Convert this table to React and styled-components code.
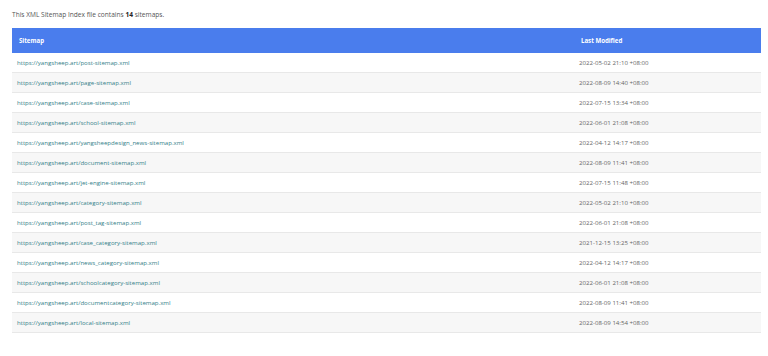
import React from 'react'
import styled, { createGlobalStyle } from 'styled-components'

const GlobalStyle = createGlobalStyle`
  body {
    margin: 0;
    background: #fff;
    font-family: "Open Sans", "Noto Sans", sans-serif;
    color: #444;
  }
`

const Page = styled.div`
  padding: 10px 7px 0 12px;
`

const Intro = styled.p`
  margin: 0 0 9px;
  font-size: 6.6px;
  line-height: 9px;
  color: #555;
  b { color: #222; }
`

const Table = styled.table`
  width: 749px;
  border-collapse: collapse;
  font-size: 6.1px;
`

const Head = styled.th`
  background: #4a7ded;
  color: #fff;
  font-weight: 700;
  text-align: left;
  height: 25px;
  padding: 0 7px;
  width: ${p => p.$width || 'auto'};
`

const Row = styled.tr`
  background: ${p => (p.$even ? '#f7f7f7' : '#fff')};
  border-bottom: 1px solid #e8e8e8;
`

const Cell = styled.td`
  height: 19px;
  padding: 0 5px;
  color: #666;
`

const Link = styled.a`
  color: #348089;
  text-decoration: none;
`

const maps = [
  ['post-sitemap.xml', '2022-05-02 21:10 +08:00'],
  ['page-sitemap.xml', '2022-08-09 14:40 +08:00'],
  ['case-sitemap.xml', '2022-07-15 13:34 +08:00'],
  ['school-sitemap.xml', '2022-06-01 21:08 +08:00'],
  ['yangsheepdesign_news-sitemap.xml', '2022-04-12 14:17 +08:00'],
  ['document-sitemap.xml', '2022-08-09 11:41 +08:00'],
  ['jet-engine-sitemap.xml', '2022-07-15 11:48 +08:00'],
  ['category-sitemap.xml', '2022-05-02 21:10 +08:00'],
  ['post_tag-sitemap.xml', '2022-06-01 21:08 +08:00'],
  ['case_category-sitemap.xml', '2021-12-15 13:25 +08:00'],
  ['news_category-sitemap.xml', '2022-04-12 14:17 +08:00'],
  ['schoolcategory-sitemap.xml', '2022-06-01 21:08 +08:00'],
  ['documentcategory-sitemap.xml', '2022-08-09 11:41 +08:00'],
  ['local-sitemap.xml', '2022-08-09 14:54 +08:00'],
]

const App = () => {
  return (
    <Page>
      <GlobalStyle />
      <Intro>
        This XML Sitemap Index file contains <b>14</b> sitemaps.
      </Intro>
      <Table>
        <thead>
          <tr>
            <Head>Sitemap</Head>
            <Head $width="173px">Last Modified</Head>
          </tr>
        </thead>
        <tbody>
          {maps.map(([file, date], i) => (
            <Row key={file} $even={i % 2 === 1}>
              <Cell>
                <Link href="#">https://yangsheep.art/{file}</Link>
              </Cell>
              <Cell>{date}</Cell>
            </Row>
          ))}
        </tbody>
      </Table>
    </Page>
  )
}

export default App
